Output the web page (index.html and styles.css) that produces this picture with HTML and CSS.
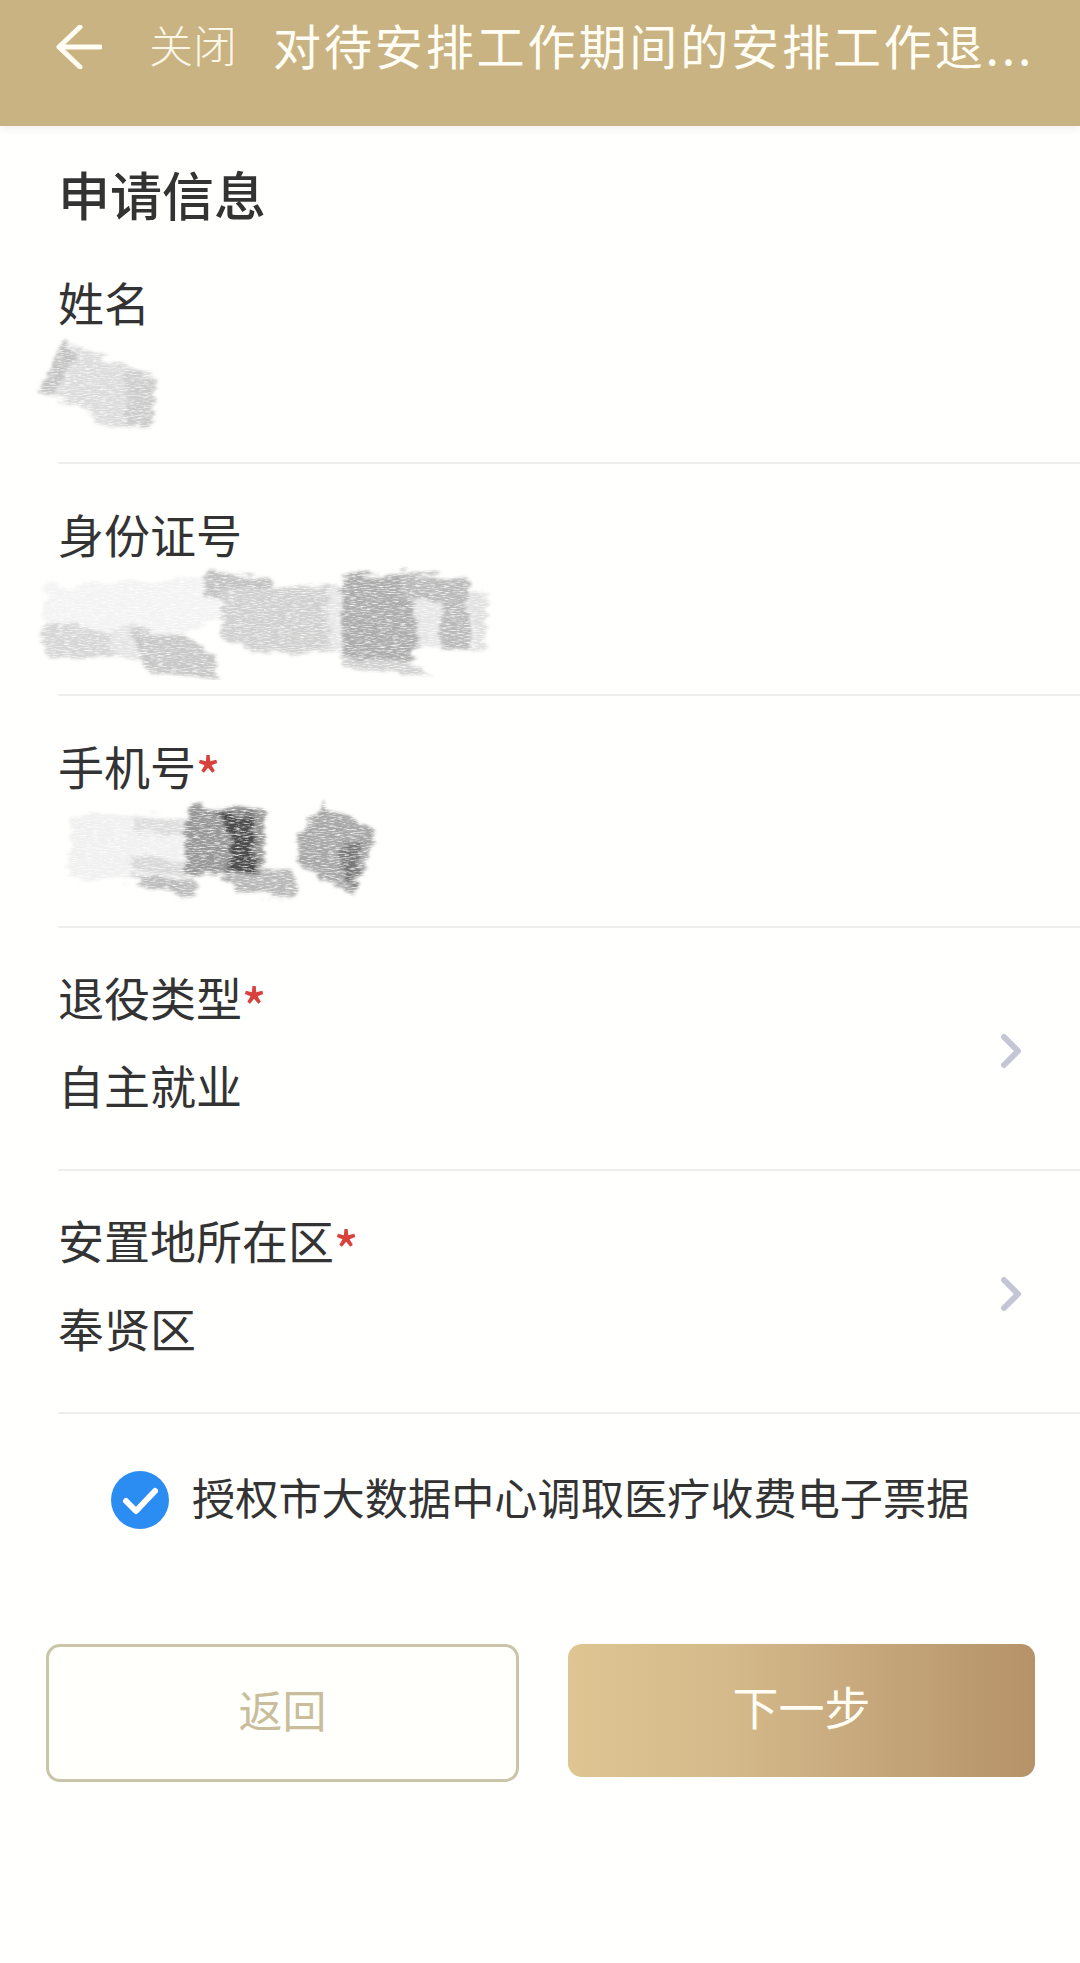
FILE: index.html
```html
<!DOCTYPE html>
<html lang="zh-CN">
<head>
<meta charset="utf-8">
<title>申请信息</title>
<link rel="stylesheet" href="styles.css">
</head>
<body>
<svg class="defs" aria-hidden="true">
  <defs>
    <filter id="pencil" x="-10%" y="-15%" width="120%" height="130%">
      <feTurbulence type="fractalNoise" baseFrequency="0.035 0.16" numOctaves="3" seed="11" result="warp"/>
      <feDisplacementMap in="SourceGraphic" in2="warp" scale="16" xChannelSelector="R" yChannelSelector="G" result="d"/>
      <feGaussianBlur in="d" stdDeviation="1.8" result="b"/>
      <feTurbulence type="fractalNoise" baseFrequency="0.14 0.95" numOctaves="4" seed="5" result="n"/>
      <feColorMatrix in="n" type="matrix" values="0 0 0 0 0  0 0 0 0 0  0 0 0 0 0  0 0 0 2.2 -0.2" result="grain"/>
      <feComposite in="b" in2="grain" operator="in"/>
    </filter>
  </defs>
</svg>

<header class="topbar">
  <svg class="back" viewBox="0 0 46 44" aria-hidden="true"><path d="M44 22H3M24 2 3 22l21 20"/></svg>
  <span class="close">关闭</span>
  <span class="title">对待安排工作期间的安排工作退...</span>
</header>

<main class="form">
  <h1 class="heading">申请信息</h1>

  <section class="row row-info">
    <div class="label">姓名</div>
    <svg class="scribble s-name" viewBox="30 333 130 104" aria-hidden="true">
      <g filter="url(#pencil)">
        <path fill="#dcdcdc" d="M62 340 108 358 155 376 150 428 104 426 78 404 38 394Z"/>
        <path fill="#c2c2c2" d="M62 340 76 356 52 392 38 394Z"/>
        <path fill="#cccccc" d="M128 372 155 376 150 428 126 424Z"/>
      </g>
    </svg>
  </section>

  <section class="row row-info">
    <div class="label">身份证号</div>
    <svg class="scribble s-id" viewBox="36 564 456 116" aria-hidden="true">
      <g filter="url(#pencil)">
        <path fill="#f3f3f3" d="M46 586 208 578 224 620 148 640 44 640Z"/>
        <path fill="#d6d6d6" d="M42 624 70 622 116 640 112 660 46 656Z"/>
        <path fill="#e4e4e4" d="M110 630 140 626 150 660 112 658Z"/>
        <path fill="#c8c8c8" d="M130 630 176 632 216 656 216 678 148 672Z"/>
        <path fill="#c2c2c2" d="M204 568 272 578 270 598 224 604 204 596Z"/>
        <path fill="#d0d0d0" d="M222 590 334 586 330 650 262 654 222 640Z"/>
        <path fill="#e6e6e6" d="M328 586 342 588 342 652 330 652Z"/>
        <path fill="#adadad" d="M342 576 414 574 420 648 400 664 342 658Z"/>
        <path fill="#bababa" d="M400 570 468 578 470 648 440 650 440 600 404 600Z"/>
        <path fill="#e6e6e6" d="M414 600 440 600 442 646 418 646Z"/>
        <path fill="#e0e0e0" d="M470 592 488 592 484 654 472 652Z"/>
        <path fill="#d2d2d2" d="M342 656 400 660 436 678 372 670 342 666Z"/>
      </g>
    </svg>
  </section>

  <section class="row row-info">
    <div class="label">手机号<span class="req">*</span></div>
    <svg class="scribble s-phone" viewBox="63 794 320 116" aria-hidden="true">
      <g filter="url(#pencil)">
        <path fill="#f0f0f0" d="M72 812 186 814 188 872 128 878 68 876Z"/>
        <path fill="#dcdcdc" d="M132 814 186 816 188 836 134 830Z"/>
        <path fill="#d8d8d8" d="M130 852 186 862 186 874 130 868Z"/>
        <path fill="#bcbcbc" d="M130 872 196 880 196 894 150 888Z"/>
        <path fill="#989898" d="M190 803 266 808 262 874 186 872 184 838Z"/>
        <path fill="#4c4c4c" d="M218 810 254 812 256 874 226 874 232 840Z"/>
        <path fill="#b8b8b8" d="M224 874 292 866 296 896 240 890Z"/>
        <path fill="#a8a8a8" d="M324 802 376 830 356 892 300 864 296 834Z"/>
        <path fill="#787878" d="M338 846 362 836 358 884 344 874Z"/>
      </g>
    </svg>
  </section>

  <section class="row row-select">
    <div class="field">
      <div class="label">退役类型<span class="req">*</span></div>
      <div class="value">自主就业</div>
    </div>
    <svg class="chevron" viewBox="0 0 22 36" aria-hidden="true"><path d="M4 4 18 18 4 32"/></svg>
  </section>

  <section class="row row-select">
    <div class="field">
      <div class="label">安置地所在区<span class="req">*</span></div>
      <div class="value">奉贤区</div>
    </div>
    <svg class="chevron" viewBox="0 0 22 36" aria-hidden="true"><path d="M4 4 18 18 4 32"/></svg>
  </section>
</main>

<div class="consent">
  <svg class="check" viewBox="0 0 58 58" aria-hidden="true"><circle cx="29" cy="29" r="29"/><path d="M15 30 25 40 44 20"/></svg>
  <span class="consent-text">授权市大数据中心调取医疗收费电子票据</span>
</div>

<div class="actions">
  <button class="btn btn-back" type="button"><span class="btn-label">返回</span></button>
  <button class="btn btn-next" type="button"><span class="btn-label">下一步</span></button>
</div>
</body>
</html>
```
FILE: styles.css
```css
* { box-sizing: border-box; }
html, body { margin: 0; padding: 0; }
body {
  width: 1080px;
  height: 1963px;
  overflow: hidden;
  background: #fffffe;
  color: #333333;
  font-family: "Noto Sans CJK SC", "Noto Sans", sans-serif;
}
.defs { position: absolute; width: 0; height: 0; }

.topbar {
  height: 126px;
  padding: 0 0 32px 56px;
  display: flex;
  align-items: center;
  background: #c9b382;
  color: #fffdf4;
  box-shadow: 0 3px 8px rgba(0, 0, 0, 0.06);
}
.back { width: 46px; height: 44px; flex: none; }
.back path { fill: none; stroke: #fffdf4; stroke-width: 5; stroke-linecap: round; stroke-linejoin: round; }
.close { margin-left: 47px; font-size: 44px; line-height: 60px; padding-bottom: 6px; font-weight: 300; color: #fbf7e8; }
.title { margin-left: 36px; font-size: 48px; line-height: 60px; padding-bottom: 6px; letter-spacing: 2.9px; white-space: nowrap; }

.form { padding-left: 58px; }
.heading {
  margin: 0;
  padding-top: 32px;
  height: 106px;
  font-size: 52px;
  line-height: 72px;
  font-weight: 500;
  color: #333333;
}
.row { border-bottom: 2px solid #eeeeee; padding-top: 39px; }
.row-info { height: 232px; }
.label { font-size: 46px; line-height: 60px; color: #333333; white-space: nowrap; }
.req { color: #d8423e; font-size: 50px; line-height: 0; font-weight: 500; vertical-align: -10px; }
.row-select { height: 243px; display: flex; align-items: center; justify-content: space-between; padding: 0 58px 0 0; }
.field { margin-bottom: 18px; }
.value { margin-top: 28px; font-size: 46px; line-height: 60px; color: #333333; }
.chevron { width: 22px; height: 36px; flex: none; margin-top: 5px; }
.chevron path { fill: none; stroke: #c4c6d6; stroke-width: 6; stroke-linecap: round; stroke-linejoin: round; }

.scribble { display: block; }
.s-name { width: 130px; height: 104px; margin: 3px 0 0 -28px; }
.s-id { width: 456px; height: 116px; margin: 1px 0 0 -22px; }
.s-phone { width: 320px; height: 116px; margin: 1px 0 0 5px; }

.consent {
  margin-top: 52px;
  padding-left: 111px;
  display: flex;
  align-items: center;
  gap: 23px;
}
.check { width: 58px; height: 58px; flex: none; }
.check circle { fill: #2b8cf2; }
.check path { fill: none; stroke: #ffffff; stroke-width: 6; stroke-linecap: round; stroke-linejoin: round; }
.consent-text { font-size: 43.2px; line-height: 60px; padding-bottom: 8px; color: #333333; white-space: nowrap; }

.actions {
  margin-top: 110px;
  padding-left: 46px;
  display: flex;
  align-items: flex-start;
  gap: 49px;
}
.btn {
  border-radius: 14px;
  font-family: inherit;
  font-size: 44px;
  padding: 0;
}
.btn-back {
  width: 473px;
  height: 138px;
  background: #fffffb;
  border: 3px solid #cac5a8;
  color: #c9bd9c;
  padding-bottom: 8px;
}
.btn-next {
  width: 467px;
  height: 133px;
  border: 0;
  background: linear-gradient(90deg, #dfc592 0%, #d4b98a 35%, #c3a479 70%, #b69268 100%);
  color: #fffdf4;
  font-size: 46px;
  padding-bottom: 12px;
}
```
